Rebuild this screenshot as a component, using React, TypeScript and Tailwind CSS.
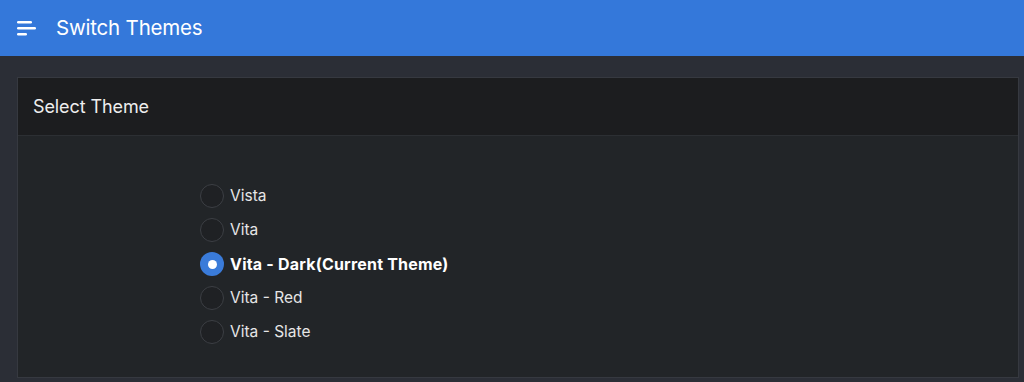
import React, { useState } from 'react';

const themes = ['Vista', 'Vita', 'Vita - Dark', 'Vita - Red', 'Vita - Slate'];

function MenuIcon() {
  return (
    <svg width="20" height="16" viewBox="0 0 20 16" fill="none">
      <rect x="0" y="1" width="15" height="2.4" rx="1.2" fill="white" />
      <rect x="0" y="7" width="19" height="2.4" rx="1.2" fill="white" />
      <rect x="0" y="13" width="10" height="2.4" rx="1.2" fill="white" />
    </svg>
  );
}

export default function App() {
  const [current, setCurrent] = useState('Vita - Dark');

  return (
    <div className="w-[1024px] h-[382px] overflow-hidden bg-[#2b2e36] font-['Inter','Liberation_Sans',sans-serif]">
      <header className="h-[56px] bg-[#3478da] flex items-center pl-[17px] gap-[19px]">
        <MenuIcon />
        <h1 className="text-white text-[20.5px] leading-none tracking-[-0.2px]">Switch Themes</h1>
      </header>

      <div className="pt-[21px] pl-[17px] pr-[5px]">
        <div className="border border-[#363940] bg-[#222528] h-[301px]">
          <div className="h-[58px] bg-[#1c1d1f] border-b border-[#2c2f33] flex items-center px-[15px]">
            <span className="text-[#eeeeee] text-[18px] tracking-[-0.1px]">Select Theme</span>
          </div>
          <div className="pt-[48px] pl-[182px] flex flex-col gap-[10px]">
            {themes.map((t) => {
              const active = t === current;
              return (
                <label key={t} className="flex items-center gap-[6px] h-[24px] cursor-pointer" onClick={() => setCurrent(t)}>
                  {active ? (
                    <span className="w-[24px] h-[24px] rounded-full bg-[#3a7bd9] flex items-center justify-center">
                      <span className="w-[9px] h-[9px] rounded-full bg-white" />
                    </span>
                  ) : (
                    <span className="w-[24px] h-[24px] rounded-full bg-[#1f2124] border border-[#3c3f44]" />
                  )}
                  <span className={active ? 'text-white font-bold text-[16px] tracking-[0.2px]' : 'text-[#e6e6e6] text-[15.5px]'}>
                    {active ? `${t}(Current Theme)` : t}
                  </span>
                </label>
              );
            })}
          </div>
        </div>
      </div>
    </div>
  );
}
